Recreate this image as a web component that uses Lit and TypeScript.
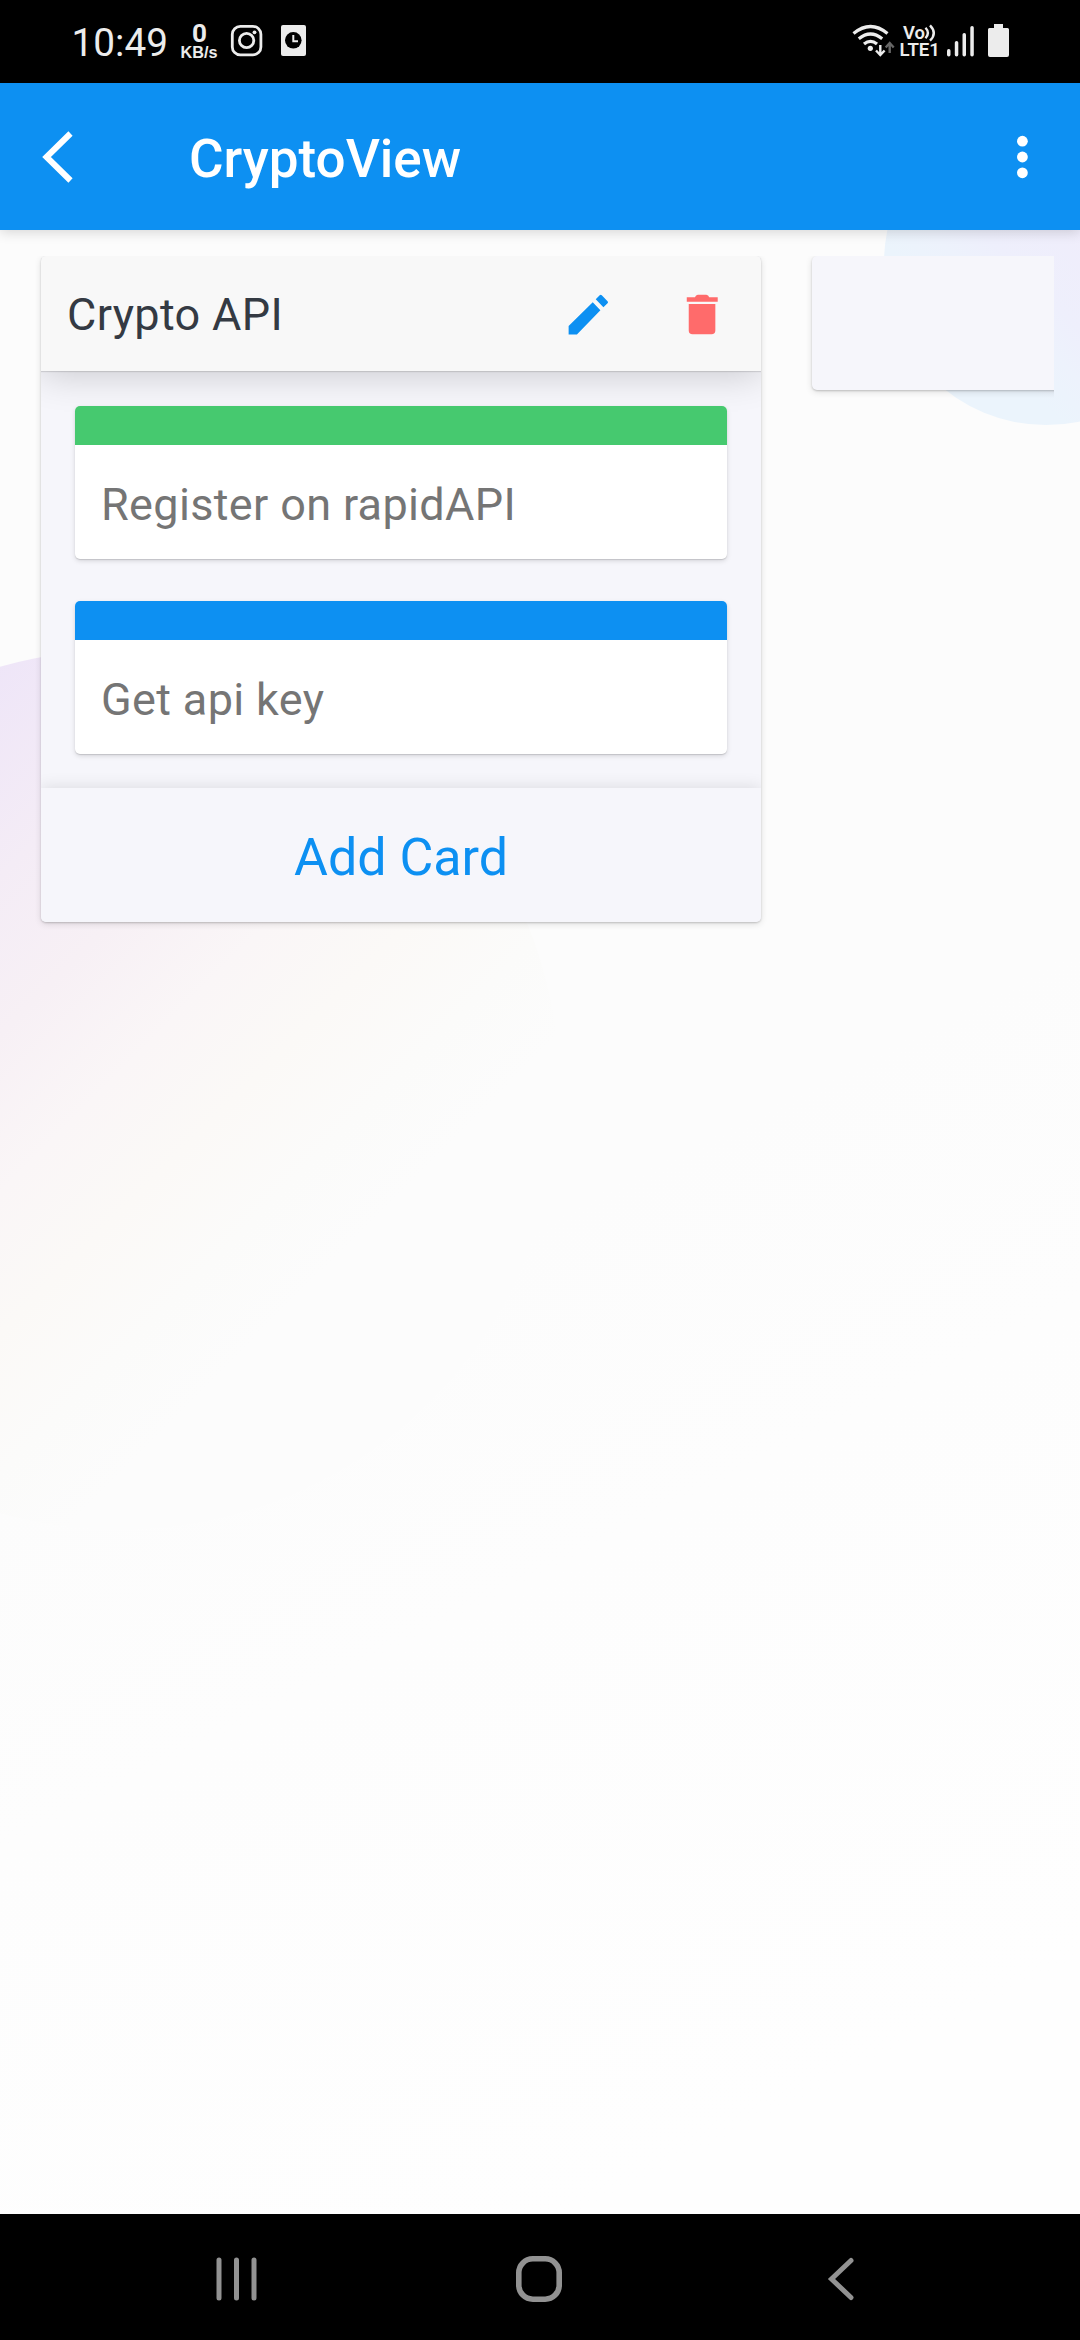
import { LitElement, html, css, svg } from "lit";
import { customElement, property } from "lit/decorators.js";

@customElement("status-bar")
class StatusBar extends LitElement {
  static styles = css`
    :host { display: block; height: 83px; background: #000; }
    .all { display: block; width: 1080px; height: 83px; font-family: Roboto, sans-serif; }
  `;
  render() {
    return html`<svg class="all" viewBox="0 0 1080 83" fill="#ececec">
      <text x="71.500" y="56" font-size="39.5" textLength="96.500" lengthAdjust="spacingAndGlyphs">10:49</text>
      <text x="192" y="42" font-size="26.500" font-weight="700" textLength="15" lengthAdjust="spacingAndGlyphs">0</text>
      <text x="180.500" y="58.300" font-size="16" font-family="Liberation Sans, sans-serif" font-weight="700" textLength="37" lengthAdjust="spacingAndGlyphs">KB/s</text>
      <g fill="none" stroke="#ececec">
        <rect x="232.300" y="26.300" width="28.600" height="28.600" rx="8" stroke-width="2.800"/>
        <circle cx="246.600" cy="40.500" r="7.200" stroke-width="2.800"/>
      </g>
      <circle cx="254.500" cy="32.300" r="1.900"/>
      <rect x="281" y="25" width="25" height="31" rx="2"/>
      <circle cx="293.300" cy="40.300" r="8.300" fill="#000"/>
      <path d="M293.300 35v6.300h4.700" fill="none" stroke="#ececec" stroke-width="2"/>
      <g fill="none" stroke="#ececec" stroke-width="3.200">
        <path d="M853.500 33.500q17-14 34 0"/>
        <path d="M858.800 38.800q11.700-9.600 23.400 0"/>
        <path d="M864 44q6.500-5.400 13 0"/>
      </g>
      <circle cx="870.300" cy="48.300" r="2.600"/>
      <path d="M880.300 45v9.500M876 50.500l4.300 4.500 4.300-4.500" fill="none" stroke="#ececec" stroke-width="2.400"/>
      <path d="M889.700 53v-9.500M885.700 47.500l4-4.500 4 4.500" fill="none" stroke="#666" stroke-width="2.400"/>
      <text x="903" y="39" font-size="18" font-weight="600" textLength="22" lengthAdjust="spacingAndGlyphs">Vo</text>
      <path d="M925.500 27.800q4.800 5.200 0 10.400M930 25.300q7.600 7.900 0 15.400" fill="none" stroke="#ececec" stroke-width="2.400"/>
      <text x="899.500" y="56" font-size="18.500" font-weight="600" textLength="40.500" lengthAdjust="spacingAndGlyphs">LTE1</text>
      <rect x="947" y="49" width="3.500" height="7.500" rx="1.700"/>
      <rect x="954.800" y="41" width="3.500" height="15.500" rx="1.700"/>
      <rect x="962.500" y="33" width="3.500" height="23.500" rx="1.700"/>
      <rect x="970.300" y="26" width="3.500" height="30.500" rx="1.700"/>
      <path d="M994 24h9v4h4.500q1.500 0 1.500 1.500V55q0 2-2 2h-17q-2 0-2-2V29.500q0-1.500 1.500-1.500h4.500z"/>
    </svg>`;
  }
}

@customElement("task-card")
class TaskCard extends LitElement {
  @property() label = "";
  @property() tint = "";
  static styles = css`
    :host { display: block; }
    .card { height: 153px; border-radius: 5px; overflow: hidden; background: #fff; box-shadow: 0 1px 1px rgba(0,0,0,.13), 0 2px 5px rgba(0,0,0,.13); font: 45px/52px Roboto, sans-serif; letter-spacing: .35px; color: #757575; }
    .strip { height: 39px; }
    .label { padding: 34px 26px 0; white-space: nowrap; }
  `;
  render() {
    return html`<div class="card">
      <div class="strip" style="background:${this.tint}"></div>
      <div class="label">${this.label}</div>
    </div>`;
  }
}

@customElement("app-root")
class AppRoot extends LitElement {
  static styles = css`
    :host { display: flex; flex-direction: column; width: 1080px; height: 2340px; overflow: hidden; font-family: Roboto, sans-serif; background: #000; }
    .appbar { height: 147px; box-sizing: border-box; flex: none; background: #0d90f2; display: flex; align-items: center; padding: 0 41px; color: #fff; position: relative; z-index: 1; box-shadow: 0 2px 12px rgba(0,0,0,.16); }
    .back { width: 32px; height: 52px; }
    .title { flex: 1; margin: 4px 0 0 116px; font-size: 53px; font-weight: 500; }
    .more { width: 34px; height: 52px; }
    .content { flex: 1; position: relative; overflow: hidden; box-sizing: border-box; padding: 26px 26px 0; background: linear-gradient(153deg, #fcfcfc 50%, #fdfdfd 64%, #fefefe 90%); }
    .blob { position: absolute; border-radius: 50%; }
    .blob.left { left: -320px; top: 420px; width: 880px; height: 880px; background: linear-gradient(135deg, #eee5f8 18%, #f4ecf6 31%, #f7f0f5 40%, #faf6f7 49%, #fbf9f7 57%, #fbfbfa 65%, #fcfcfc 72%); }
    .blob.right { left: 883.5px; top: -129px; width: 324px; height: 324px; background: linear-gradient(45deg, #ebf4fc 28%, #edf2fc 37%, #eeeffc 45%, #f0edfb 65%); }
    .board { position: relative; overflow: hidden; display: flex; align-items: flex-start; gap: 51px; padding: 0 0 20px 15px; }
    .column { flex: none; width: 720px; height: 666px; box-sizing: border-box; display: flex; flex-direction: column; border-radius: 5px; overflow: hidden; background: #f6f6fb; }
    .shade { box-shadow: 0 1px 2px rgba(0,0,0,.18), 0 2px 7px rgba(0,0,0,.12); }
    .head { height: 115px; flex: none; box-sizing: border-box; display: flex; align-items: center; background: #f8f8f8; padding: 2px 35px 0 26px; font-size: 45px; letter-spacing: .35px; color: #343a43; box-shadow: 0 1px 1px rgba(0,0,0,.12), 0 3px 36px rgba(0,0,0,.19); }
    .name { flex: 1; }
    .icon { width: 53px; height: 53px; margin-left: 61px; }
    .icon.edit { fill: #0d90f2; }
    .icon.trash { fill: #ff6b6b; margin-right: -3px; }
    .cards { flex: 1; display: flex; flex-direction: column; gap: 42px; padding: 35px 34px 0; }
    .add { height: 134px; flex: none; display: flex; align-items: center; justify-content: center; background: #f6f6fb; color: #0d90f2; font-size: 52px; padding-top: 4px; box-sizing: border-box; box-shadow: 0 0 16px rgba(0,0,0,.12); }
    .next { flex: none; width: 720px; height: 134px; border-radius: 5px; background: #f6f6fb; }
    .nav { height: 126px; flex: none; background: #000; display: flex; align-items: center; padding: 3px 0 0 213px; box-sizing: border-box; }
    .nav svg { display: block; fill: none; stroke: #929292; }
    .nav .home { margin: 0 263px 0 253.5px; }
  `;
  cards = [
    { label: "Register on rapidAPI", tint: "#46c96f" },
    { label: "Get api key", tint: "#0d90f2" },
  ];
  render() {
    return html`
      <status-bar></status-bar>
      <header class="appbar">
        <svg class="back" viewBox="0 0 32 52"><path d="M29.500 2.500L5.500 26l24 23.500" fill="none" stroke="#fff" stroke-width="6"/></svg>
        <div class="title">CryptoView</div>
        <svg class="more" viewBox="0 0 34 52" fill="#fff">${[10.2, 26, 41.8].map((y) => svg`<circle cx="17.400" cy=${y} r="5.400"/>`)}</svg>
      </header>
      <main class="content">
        <div class="blob left"></div>
        <div class="blob right"></div>
        <div class="board">
          <section class="column shade">
            <div class="head">
              <span class="name">Crypto API</span>
              <svg class="icon edit" viewBox="0 0 512 512"><path d="M64 368v80h80L371 216 297 138zM326 109l38-38q10-10 20 0l56 56q10 10 0 20l-40 40z"/></svg>
              <svg class="icon trash" viewBox="0 0 512 512"><path d="M123 154h257v256q0 37-38 37H161q-38 0-38-37zM104 90h79q8-26 28-26h82q20 0 28 26h82v42H104z"/></svg>
            </div>
            <div class="cards">
              ${this.cards.map((c) => html`<task-card .label=${c.label} .tint=${c.tint}></task-card>`)}
            </div>
            <div class="add">Add Card</div>
          </section>
          <section class="next shade"></section>
        </div>
      </main>
      <nav class="nav">
        <svg width="48" height="46" viewBox="0 0 48 46"><path d="M6 4v38M23.500 4v38M41 4v38" stroke-width="5" stroke-linecap="round"/></svg>
        <svg class="home" width="48" height="48" viewBox="0 0 48 48"><rect x="3.800" y="3.800" width="40.400" height="40.400" rx="14" stroke-width="5.600"/></svg>
        <svg width="30" height="46" viewBox="0 0 30 46"><path d="M25 4.500L5.500 23 25 41.500" stroke-width="5" stroke-linecap="round"/></svg>
      </nav>`;
  }
}
